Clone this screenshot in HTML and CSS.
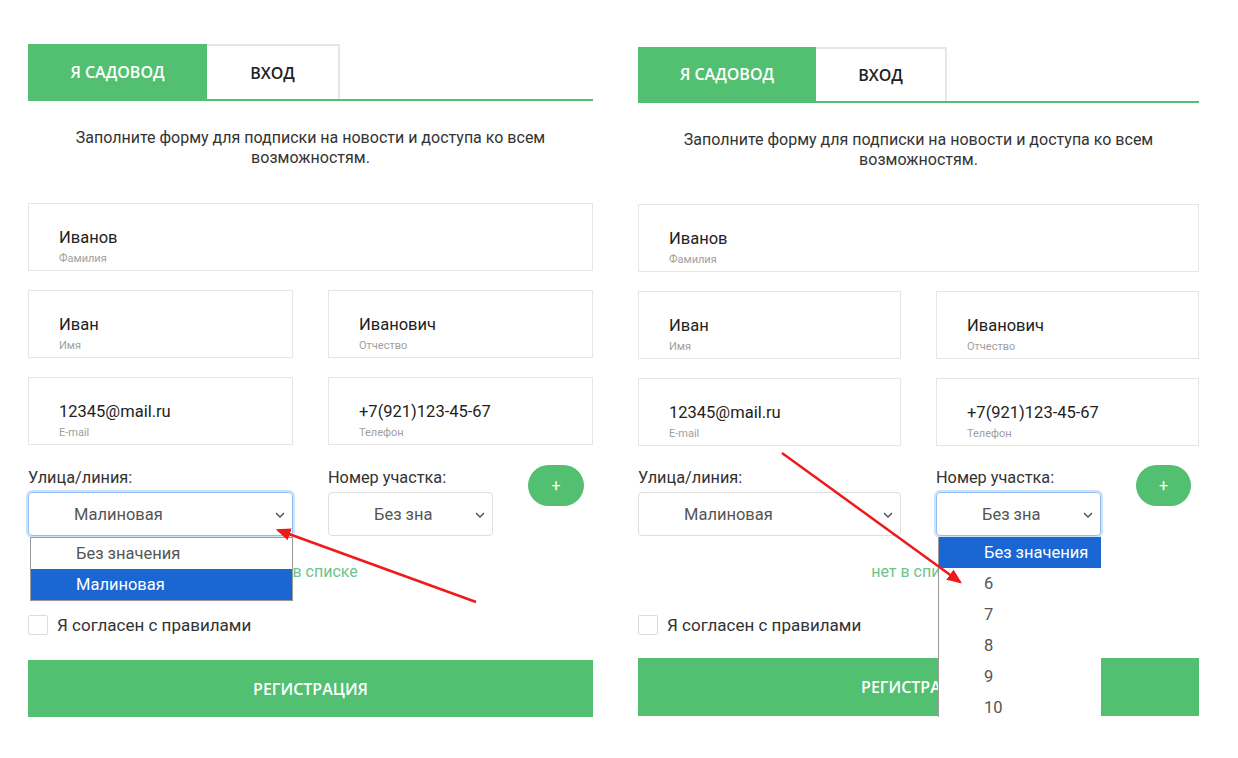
FILE: index.html
```html
<!DOCTYPE html>
<html>

<head>
    <title>Регистрация садовода</title>
    <link rel="stylesheet" href="styles.css">
</head>

<body>
    <div class="page">
        <!-- Left: street dropdown open -->
        <div class="panel">
            <div class="tabs">
                <div class="tab tab--active">Я САДОВОД</div>
                <div class="tab">ВХОД</div>
            </div>
            <p class="intro">Заполните форму для подписки на новости и доступа ко всем<br>возможностям.</p>

            <div class="field">
                <div class="field__value">Иванов</div>
                <div class="field__label">Фамилия</div>
            </div>
            <div class="row">
                <div class="field">
                    <div class="field__value">Иван</div>
                    <div class="field__label">Имя</div>
                </div>
                <div class="field">
                    <div class="field__value">Иванович</div>
                    <div class="field__label">Отчество</div>
                </div>
            </div>
            <div class="row">
                <div class="field">
                    <div class="field__value">12345@mail.ru</div>
                    <div class="field__label">E-mail</div>
                </div>
                <div class="field">
                    <div class="field__value">+7(921)123-45-67</div>
                    <div class="field__label">Телефон</div>
                </div>
            </div>

            <div class="select-row">
                <div class="select-field">
                    <label>Улица/линия:</label>
                    <div class="select select--focus">
                        <span class="select__text">Малиновая</span>
                        <svg class="chevron" width="10" height="6" viewBox="0 0 10 6"><polyline points="1,1 5,5 9,1" /></svg>
                        <ul class="options">
                            <li>Без значения</li>
                            <li class="selected">Малиновая</li>
                        </ul>
                    </div>
                </div>
                <div class="select-field">
                    <label>Номер участка:</label>
                    <div class="select select--small">
                        <span class="select__text">Без зна</span>
                        <svg class="chevron" width="10" height="6" viewBox="0 0 10 6"><polyline points="1,1 5,5 9,1" /></svg>
                    </div>
                </div>
                <button class="add-btn">+</button>
            </div>

            <div class="not-listed">нет в списке</div>

            <div class="agree">
                <span class="checkbox"></span>
                <span>Я согласен с правилами</span>
            </div>

            <button class="submit-btn">РЕГИСТРАЦИЯ</button>
        </div>

        <!-- Right: plot number dropdown open -->
        <div class="panel panel--alt">
            <div class="tabs">
                <div class="tab tab--active">Я САДОВОД</div>
                <div class="tab">ВХОД</div>
            </div>
            <p class="intro">Заполните форму для подписки на новости и доступа ко всем<br>возможностям.</p>

            <div class="field">
                <div class="field__value">Иванов</div>
                <div class="field__label">Фамилия</div>
            </div>
            <div class="row">
                <div class="field">
                    <div class="field__value">Иван</div>
                    <div class="field__label">Имя</div>
                </div>
                <div class="field">
                    <div class="field__value">Иванович</div>
                    <div class="field__label">Отчество</div>
                </div>
            </div>
            <div class="row">
                <div class="field">
                    <div class="field__value">12345@mail.ru</div>
                    <div class="field__label">E-mail</div>
                </div>
                <div class="field">
                    <div class="field__value">+7(921)123-45-67</div>
                    <div class="field__label">Телефон</div>
                </div>
            </div>

            <div class="select-row">
                <div class="select-field">
                    <label>Улица/линия:</label>
                    <div class="select">
                        <span class="select__text">Малиновая</span>
                        <svg class="chevron" width="10" height="6" viewBox="0 0 10 6"><polyline points="1,1 5,5 9,1" /></svg>
                    </div>
                </div>
                <div class="select-field">
                    <label>Номер участка:</label>
                    <div class="select select--small select--focus">
                        <span class="select__text">Без зна</span>
                        <svg class="chevron" width="10" height="6" viewBox="0 0 10 6"><polyline points="1,1 5,5 9,1" /></svg>
                        <ul class="options options--long">
                            <li class="selected">Без значения</li>
                            <li>6</li>
                            <li>7</li>
                            <li>8</li>
                            <li>9</li>
                            <li>10</li>
                        </ul>
                    </div>
                </div>
                <button class="add-btn">+</button>
            </div>

            <div class="not-listed">нет в списке</div>

            <div class="agree">
                <span class="checkbox"></span>
                <span>Я согласен с правилами</span>
            </div>

            <button class="submit-btn">РЕГИСТРАЦИЯ</button>
        </div>
    </div>

    <!-- annotation arrows -->
    <svg class="arrows" width="1238" height="758" viewBox="0 0 1238 758">
        <defs>
            <marker id="head" markerWidth="6" markerHeight="5" refX="5" refY="2.5" orient="auto" markerUnits="strokeWidth">
                <polygon points="0,0 6,2.5 0,5" fill="#f01919" />
            </marker>
        </defs>
        <line x1="476" y1="602" x2="278" y2="530" stroke="#f01919" stroke-width="2.5" marker-end="url(#head)" />
        <line x1="782" y1="453" x2="960" y2="582" stroke="#f01919" stroke-width="2.5" marker-end="url(#head)" />
    </svg>
</body>

</html>
```

FILE: styles.css
```css
body {
    margin: 0;
    background: #fff;
    font-family: Roboto, "Liberation Sans", sans-serif;
    color: #333;
}

.page {
    display: flex;
    gap: 45px;
    padding: 44px 0 0 28px;
}

.panel {
    width: 565px;
}

.panel--alt {
    width: 561px;
    padding-top: 3px;
}

/* tabs */
.tabs {
    display: flex;
    height: 55px;
    border-bottom: 2px solid #53bf70;
}

.panel--alt .tabs {
    height: 54px;
}

.tab {
    width: 131px;
    display: flex;
    align-items: center;
    justify-content: center;
    font-family: "Open Sans", "Liberation Sans", sans-serif;
    font-weight: 600;
    font-size: 16px;
    color: #222;
    border: 2px solid #e6e6e6;
    border-bottom: none;
    border-left: none;
}

.panel--alt .tab {
    width: 129px;
}

.tab--active,
.panel--alt .tab--active {
    width: 179px;
    background: #53bf70;
    color: #fff;
    border: none;
}

.panel--alt .tab--active {
    width: 178px;
}

.intro {
    margin: 27px 0 35px;
    text-align: center;
    font-size: 16px;
    line-height: 20px;
    color: #333;
}

.panel--alt .intro {
    margin-bottom: 34px;
}

/* text fields */
.field {
    height: 68px;
    box-sizing: border-box;
    border: 1px solid #e6e6e6;
    padding: 24px 0 0 30px;
}

.field__value {
    font-size: 16.5px;
    line-height: 20px;
    color: #222;
}

.field__label {
    margin-top: 4px;
    font-size: 11px;
    line-height: 13px;
    color: #a0a0a0;
}

.row {
    display: grid;
    grid-template-columns: 1fr 1fr;
    column-gap: 35px;
    margin-top: 19px;
}

/* selects */
.select-row {
    display: flex;
    align-items: flex-start;
    gap: 35px;
    margin-top: 20px;
}

.panel--alt .select-row {
    margin-top: 19px;
}

.select-field {
    display: flex;
    flex-direction: column;
    gap: 4px;
    padding-top: 3px;
}

.select-field label {
    font-size: 16.3px;
    line-height: 20px;
    color: #333;
}

.select {
    position: relative;
    width: 265px;
    height: 44px;
    box-sizing: border-box;
    border: 1px solid #dedede;
    border-radius: 4px;
    display: flex;
    align-items: center;
    padding-left: 45px;
    font-size: 16.5px;
    color: #555;
}

.panel--alt .select {
    width: 263px;
}

.select--small,
.panel--alt .select--small {
    width: 165px;
}

.select--focus {
    border-color: #8fbcf3;
    box-shadow: 0 0 0 2px #cfe2fb;
}

.select__text {
    white-space: nowrap;
}

.chevron {
    position: absolute;
    right: 7px;
    top: 19px;
    fill: none;
    stroke: #555;
    stroke-width: 1.5;
}

.options {
    position: absolute;
    top: 44px;
    left: 1px;
    right: -1px;
    margin: 0;
    padding: 0;
    list-style: none;
    background: #fff;
    border: 1px solid #9a9a9a;
    z-index: 2;
}

.options li {
    height: 31px;
    line-height: 31px;
    padding-left: 45px;
    font-size: 16.5px;
    color: #555;
}

.options li.selected {
    background: #1a66d2;
    color: #fff;
}

.options--long {
    height: 185px;
    overflow: hidden;
    border: none;
    border-left: 1px solid #9a9a9a;
    right: -1px;
}

.add-btn {
    width: 56px;
    height: 41px;
    border: none;
    border-radius: 21px;
    background: #53bf70;
    color: #fff;
    font-size: 16px;
    font-family: Roboto, sans-serif;
    line-height: 1;
    cursor: pointer;
}

.panel--alt .add-btn {
    width: 55px;
}

.not-listed {
    margin-top: 26px;
    text-align: center;
    font-size: 16px;
    line-height: 20px;
    color: #6cc48a;
}

.agree {
    display: flex;
    align-items: center;
    gap: 9px;
    margin-top: 33px;
    font-size: 17px;
    color: #333;
}

.checkbox {
    width: 20px;
    height: 20px;
    box-sizing: border-box;
    border: 1px solid #dcdcdc;
    border-radius: 2px;
}

.submit-btn {
    display: block;
    width: 100%;
    height: 57px;
    margin-top: 25px;
    border: none;
    background: #53bf70;
    color: #fff;
    font-family: "Open Sans", "Liberation Sans", sans-serif;
    font-weight: 600;
    font-size: 16px;
    cursor: pointer;
}

.panel--alt .submit-btn {
    margin-top: 23px;
    height: 58px;
}

.arrows {
    position: absolute;
    top: 0;
    left: 0;
    pointer-events: none;
    z-index: 5;
}
```
